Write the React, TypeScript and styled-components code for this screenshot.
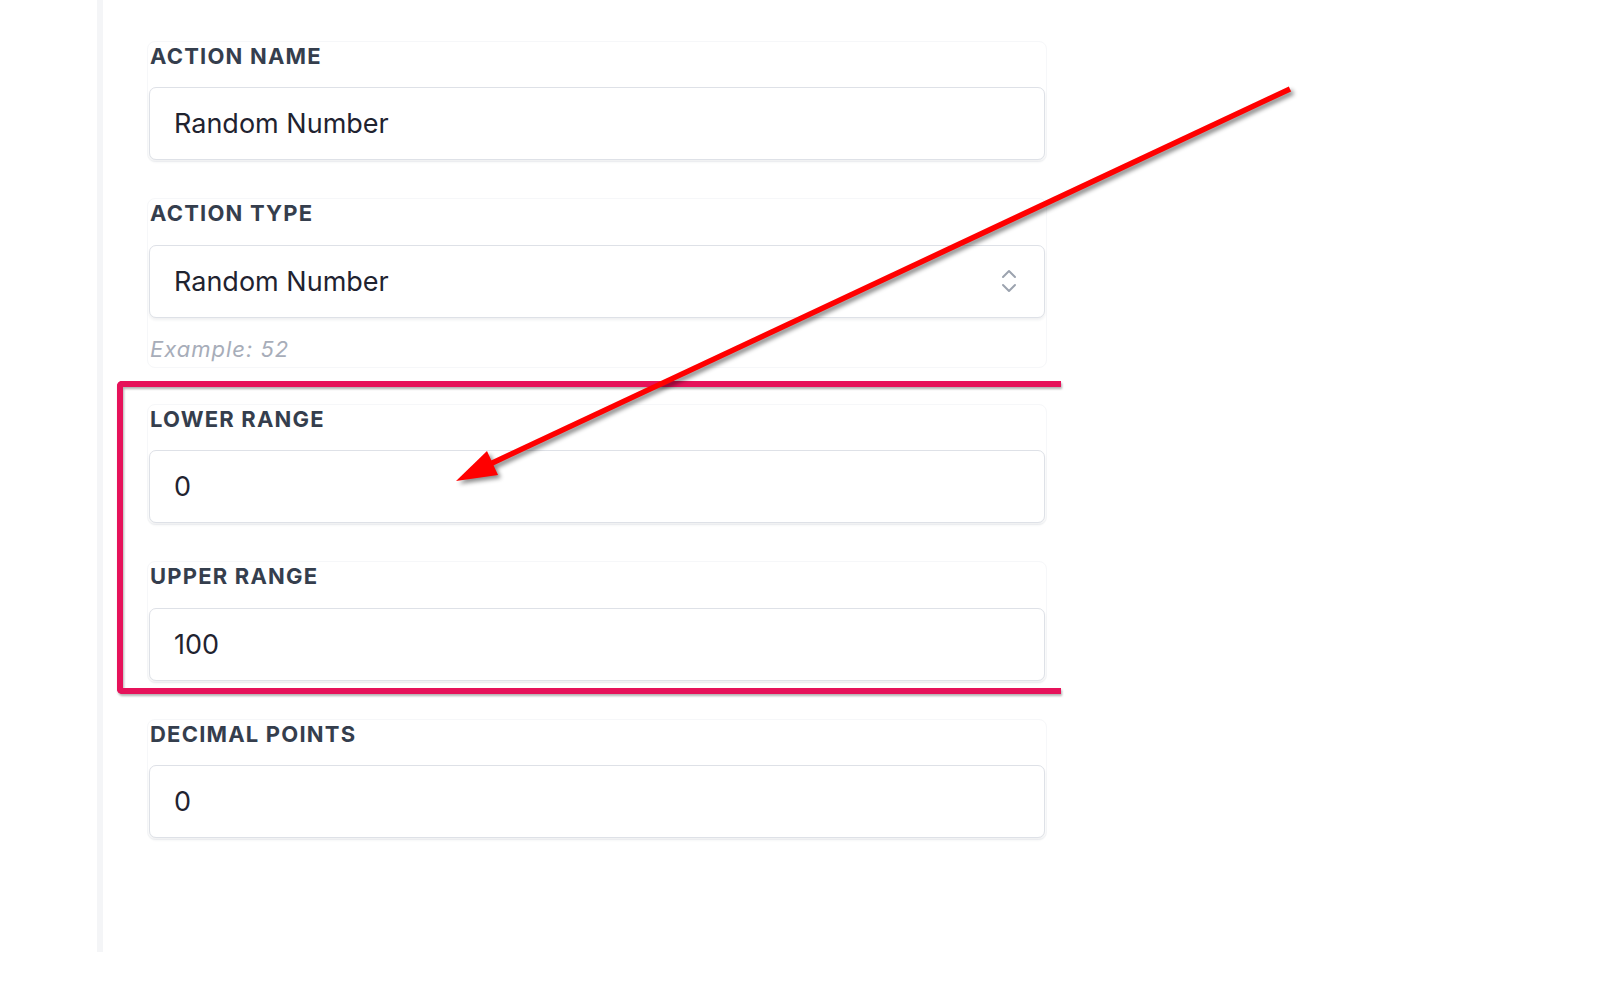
import React from "react";
import styled, { createGlobalStyle } from "styled-components";

const GlobalStyle = createGlobalStyle`
  html, body {
    margin: 0;
    padding: 0;
    background: #ffffff;
  }
  body {
    font-family: Inter, "Noto Sans", "Liberation Sans", sans-serif;
    -webkit-font-smoothing: antialiased;
  }
`;

const Page = styled.div`
  position: relative;
  width: 1600px;
  height: 992px;
  display: flex;
  align-items: flex-start;
  overflow: hidden;
  background: #ffffff;
`;

const SideStrip = styled.div`
  margin-left: 97px;
  width: 6px;
  height: 952px;
  background: #f4f5f7;
  flex: none;
`;

const Form = styled.div`
  margin-left: 44px;
  width: 900px;
  padding-top: 40.5px;
  display: flex;
  flex-direction: column;
  gap: 36px;
`;

const Field = styled.div<{ $extraBottom?: number }>`
  border: 1px solid #f6f7f9;
  border-radius: 8px;
  padding: 1px 1px ${(p) => 1 + (p.$extraBottom ?? 0)}px 1px;
  display: flex;
  flex-direction: column;
`;

const Label = styled.div`
  font-family: Inter, "Noto Sans", sans-serif;
  font-size: 22px;
  line-height: 26px;
  font-weight: 700;
  letter-spacing: 1.2px;
  color: #353e4d;
  text-transform: uppercase;
  margin-left: 1px;
`;

const InputBox = styled.div<{ $select?: boolean }>`
  margin-top: 18.5px;
  height: 73px;
  box-sizing: border-box;
  border: 1.5px solid #dee1e7;
  border-radius: 7px;
  box-shadow: 0 2px 3px rgba(30, 40, 60, 0.07);
  background: #ffffff;
  display: flex;
  align-items: center;
  justify-content: space-between;
  padding: 0 ${(p) => (p.$select ? 27 : 25)}px 0 24px;
`;

const Value = styled.span`
  font-family: Inter, "Noto Sans", sans-serif;
  font-size: 27px;
  font-weight: 400;
  color: #1f2330;
`;

const Hint = styled.div`
  margin-top: 18px;
  font-family: Inter, "Noto Sans", sans-serif;
  font-size: 22px;
  line-height: 26px;
  letter-spacing: 1px;
  font-style: italic;
  color: #a7adb9;
  margin-left: 1px;
`;

const Overlay = styled.div`
  position: absolute;
  inset: 0;
  pointer-events: none;
`;

const HighlightFrame = styled.div`
  position: absolute;
  left: 117px;
  top: 381px;
  width: 944px;
  height: 313px;
  box-sizing: border-box;
  border: 6px solid #e6125a;
  border-right: none;
  border-radius: 5px 0 0 5px;
  filter: drop-shadow(1px 2px 1px rgba(0, 0, 0, 0.3));
`;

const ArrowSvg = styled.svg`
  position: absolute;
  left: 0;
  top: 0;
  filter: drop-shadow(3px 3px 2px rgba(0, 0, 0, 0.45));
`;

const Chevrons = () => (
  <svg width="16" height="26" viewBox="0 0 16 26" fill="none">
    <path
      d="M2 9 L8 3 L14 9"
      stroke="#9ca3af"
      strokeWidth="2"
      strokeLinecap="round"
      strokeLinejoin="round"
    />
    <path
      d="M2 17 L8 23 L14 17"
      stroke="#9ca3af"
      strokeWidth="2"
      strokeLinecap="round"
      strokeLinejoin="round"
    />
  </svg>
);

export default function App() {
  return (
    <>
      <GlobalStyle />
      <Page>
        <SideStrip />
        <Form>
          <Field>
            <Label>Action Name</Label>
            <InputBox>
              <Value>Random Number</Value>
            </InputBox>
          </Field>
          <Field $extraBottom={4}>
            <Label>Action Type</Label>
            <InputBox $select>
              <Value>Random Number</Value>
              <Chevrons />
            </InputBox>
            <Hint>Example: 52</Hint>
          </Field>
          <Field>
            <Label>Lower Range</Label>
            <InputBox>
              <Value>0</Value>
            </InputBox>
          </Field>
          <Field>
            <Label>Upper Range</Label>
            <InputBox>
              <Value>100</Value>
            </InputBox>
          </Field>
          <Field>
            <Label>Decimal Points</Label>
            <InputBox>
              <Value>0</Value>
            </InputBox>
          </Field>
        </Form>
        <Overlay>
          <HighlightFrame />
          <ArrowSvg width="1600" height="992" viewBox="0 0 1600 992">
            <line
              x1="1290"
              y1="89"
              x2="488"
              y2="465"
              stroke="#ff0000"
              strokeWidth="5.5"
            />
            <polygon points="456,481 487,451 498,475" fill="#ff0000" />
          </ArrowSvg>
        </Overlay>
      </Page>
    </>
  );
}
